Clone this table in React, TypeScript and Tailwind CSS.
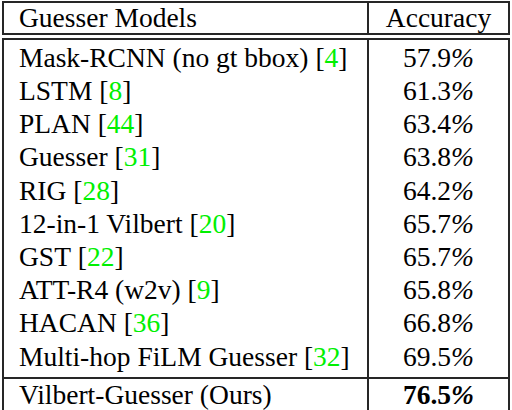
const rows: { name: string; cite: string; acc: string }[] = [
  { name: 'Mask-RCNN (no gt bbox)', cite: '4', acc: '57.9' },
  { name: 'LSTM', cite: '8', acc: '61.3' },
  { name: 'PLAN', cite: '44', acc: '63.4' },
  { name: 'Guesser', cite: '31', acc: '63.8' },
  { name: 'RIG', cite: '28', acc: '64.2' },
  { name: '12-in-1 Vilbert', cite: '20', acc: '65.7' },
  { name: 'GST', cite: '22', acc: '65.7' },
  { name: 'ATT-R4 (w2v)', cite: '9', acc: '65.8' },
  { name: 'HACAN', cite: '36', acc: '66.8' },
  { name: 'Multi-hop FiLM Guesser', cite: '32', acc: '69.5' },
]

function Pct({ value }: { value: string }) {
  return (
    <>
      {value}
      <span className="italic">%</span>
    </>
  )
}

export default function App() {
  return (
    <div className="h-[410px] w-[512px] overflow-hidden bg-white px-[2px] pt-px font-['Liberation_Serif','Times_New_Roman',serif] text-[27.5px] leading-none text-black">
      <div className="flex h-[34px] border-2 border-[#262626]">
        <div className="flex w-[365px] items-center border-r-2 border-[#262626] pl-[15px]">
          Guesser Models
        </div>
        <div className="flex flex-1 items-center justify-center">Accuracy</div>
      </div>

      <div className="mt-[3px] border-2 border-b-[3px] border-[#262626] border-b-[#444]">
        <div className="flex border-b-2 border-[#262626]">
          <div className="flex w-[365px] flex-col border-r-2 border-[#262626] pb-[4px] pl-[15px] pt-[1px]">
            {rows.map((r) => (
              <div key={r.name} className="flex h-[33.2px] items-center">
                {r.name}&nbsp;[<span className="text-[#00f000]">{r.cite}</span>]
              </div>
            ))}
          </div>
          <div className="flex flex-1 flex-col items-center pb-[4px] pt-[1px]">
            {rows.map((r) => (
              <div key={r.name} className="flex h-[33.2px] items-center">
                <Pct value={r.acc} />
              </div>
            ))}
          </div>
        </div>
        <div className="flex h-[31px]">
          <div className="flex w-[365px] items-center border-r-2 border-[#262626] pl-[15px]">
            Vilbert-Guesser (Ours)
          </div>
          <div className="flex flex-1 items-center justify-center font-bold">
            <Pct value="76.5" />
          </div>
        </div>
      </div>
    </div>
  )
}
